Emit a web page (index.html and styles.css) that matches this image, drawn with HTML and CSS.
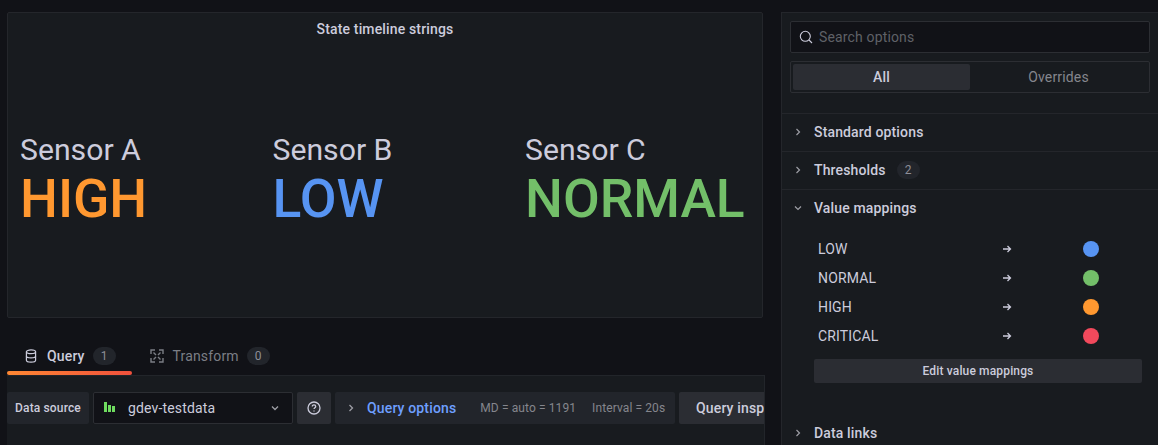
FILE: index.html
```html
<!DOCTYPE html>
<html lang="en">
<head>
    <meta charset="UTF-8" />
    <title>Edit panel</title>
    <link rel="stylesheet" href="styles.css">
</head>
<body>
    <main class="editor">
        <section class="panel">
            <h2 class="panel-title">State timeline strings</h2>
            <div class="stats">
                <div class="stat">
                    <div class="stat-name">Sensor A</div>
                    <div class="stat-value orange">HIGH</div>
                </div>
                <div class="stat">
                    <div class="stat-name">Sensor B</div>
                    <div class="stat-value blue">LOW</div>
                </div>
                <div class="stat">
                    <div class="stat-name">Sensor C</div>
                    <div class="stat-value green">NORMAL</div>
                </div>
            </div>
        </section>

        <nav class="tabs">
            <div class="tab active">
                <svg class="tab-icon" viewBox="0 0 14 14" fill="none" stroke="currentColor" stroke-width="1.2">
                    <ellipse cx="7" cy="2.8" rx="4.6" ry="1.9"/>
                    <path d="M2.4 2.8v8.4c0 1 2 1.9 4.6 1.9s4.6-.9 4.6-1.9V2.8"/>
                    <path d="M2.4 7c0 1 2 1.9 4.6 1.9s4.6-.9 4.6-1.9"/>
                </svg>
                <span>Query</span>
                <span class="count">1</span>
            </div>
            <div class="tab">
                <svg class="tab-icon" viewBox="0 0 14 14" fill="none" stroke="currentColor" stroke-width="1.4">
                    <path d="M1 5V1h4M9 1h4v4M13 9v4H9M5 13H1V9"/>
                    <path d="M3.5 3.5l2.5 2.5M10.5 3.5L8 6M10.5 10.5L8 8M3.5 10.5L6 8"/>
                </svg>
                <span>Transform</span>
                <span class="count">0</span>
            </div>
        </nav>

        <section class="query-box">
            <div class="query-row">
                <div class="ds-label">Data source</div>
                <div class="ds-select">
                    <svg class="ds-logo" viewBox="0 0 12 10">
                        <rect x="0" y="0" width="3" height="10" fill="#6fdc5f"/>
                        <rect x="4" y="3" width="3" height="7" fill="#6fdc5f"/>
                        <rect x="8" y="4" width="3" height="6" fill="#6fdc5f"/>
                    </svg>
                    <span class="ds-name">gdev-testdata</span>
                    <svg class="chevron down" viewBox="0 0 10 10" fill="none" stroke="currentColor" stroke-width="1.3">
                        <path d="M2 3.5L5 6.5L8 3.5"/>
                    </svg>
                </div>
                <button class="help-btn">
                    <svg viewBox="0 0 14 14" fill="none" stroke="currentColor" stroke-width="1.3">
                        <circle cx="7" cy="7" r="6"/>
                        <path d="M5.3 5.5c0-1 .8-1.7 1.7-1.7s1.7.7 1.7 1.6c0 1.2-1.7 1.3-1.7 2.6"/>
                        <path d="M7 9.6v1"/>
                    </svg>
                </button>
                <div class="query-options">
                    <svg class="chevron" viewBox="0 0 10 10" fill="none" stroke="currentColor" stroke-width="1.3">
                        <path d="M3.5 2L6.5 5L3.5 8"/>
                    </svg>
                    <span class="qo-title">Query options</span>
                    <span class="qo-meta">MD = auto = 1191</span>
                    <span class="qo-meta">Interval = 20s</span>
                </div>
                <button class="inspector-btn">Query inspector</button>
            </div>
        </section>
    </main>

    <aside class="options">
        <div class="options-head">
            <div class="search">
                <svg viewBox="0 0 14 14" fill="none" stroke="currentColor" stroke-width="1.1">
                    <circle cx="6.3" cy="6.3" r="5"/>
                    <path d="M10 10l3 3"/>
                </svg>
                <span>Search options</span>
            </div>
            <div class="switch">
                <div class="switch-item on">All</div>
                <div class="switch-item">Overrides</div>
            </div>
        </div>

        <div class="group">
            <svg class="chevron" viewBox="0 0 10 10" fill="none" stroke="currentColor" stroke-width="1.2"><path d="M3.5 2L6.5 5L3.5 8"/></svg>
            <span>Standard options</span>
        </div>
        <div class="group">
            <svg class="chevron" viewBox="0 0 10 10" fill="none" stroke="currentColor" stroke-width="1.2"><path d="M3.5 2L6.5 5L3.5 8"/></svg>
            <span>Thresholds</span>
            <span class="count">2</span>
        </div>
        <div class="group open">
            <svg class="chevron" viewBox="0 0 10 10" fill="none" stroke="currentColor" stroke-width="1.2"><path d="M2 3.5L5 6.5L8 3.5"/></svg>
            <span>Value mappings</span>
        </div>

        <div class="mappings">
            <div class="mapping">
                <span class="map-name">LOW</span>
                <span class="map-arrow">
                    <svg viewBox="0 0 10 10" fill="none" stroke="currentColor" stroke-width="1.3"><path d="M1 5h7.5M5.5 2l3 3-3 3"/></svg>
                </span>
                <span class="dot bg-blue"></span>
            </div>
            <div class="mapping">
                <span class="map-name">NORMAL</span>
                <span class="map-arrow">
                    <svg viewBox="0 0 10 10" fill="none" stroke="currentColor" stroke-width="1.3"><path d="M1 5h7.5M5.5 2l3 3-3 3"/></svg>
                </span>
                <span class="dot bg-green"></span>
            </div>
            <div class="mapping">
                <span class="map-name">HIGH</span>
                <span class="map-arrow">
                    <svg viewBox="0 0 10 10" fill="none" stroke="currentColor" stroke-width="1.3"><path d="M1 5h7.5M5.5 2l3 3-3 3"/></svg>
                </span>
                <span class="dot bg-orange"></span>
            </div>
            <div class="mapping">
                <span class="map-name">CRITICAL</span>
                <span class="map-arrow">
                    <svg viewBox="0 0 10 10" fill="none" stroke="currentColor" stroke-width="1.3"><path d="M1 5h7.5M5.5 2l3 3-3 3"/></svg>
                </span>
                <span class="dot bg-red"></span>
            </div>
            <button class="edit-btn">Edit value mappings</button>
        </div>

        <div class="group last">
            <svg class="chevron" viewBox="0 0 10 10" fill="none" stroke="currentColor" stroke-width="1.2"><path d="M3.5 2L6.5 5L3.5 8"/></svg>
            <span>Data links</span>
        </div>
    </aside>
</body>
</html>
```

FILE: styles.css
```css
* {
    margin: 0;
    padding: 0;
    box-sizing: border-box;
}

html, body {
    height: 100%;
    overflow: hidden;
}

body {
    display: flex;
    background-color: #111217;
    color: #ccccdc;
    font-family: Roboto, sans-serif;
    font-size: 14px;
    letter-spacing: 0.01071em;
    padding: 12px 0 0 7px;
}

button {
    font-family: inherit;
    letter-spacing: inherit;
    border: none;
}

.editor {
    width: 758px;
    flex-shrink: 0;
}

.panel {
    height: 306px;
    background-color: #181b1f;
    border: 1px solid #24262b;
    border-radius: 2px;
    width: 756px;
}

.panel-title {
    font-size: 14px;
    font-weight: 500;
    line-height: 16px;
    text-align: center;
    padding-top: 8px;
}

.stats {
    display: flex;
    padding: 96px 0 0 12px;
}

.stat {
    width: 252.5px;
    flex-shrink: 0;
    letter-spacing: 0;
}

.stat-name {
    font-size: 30.2px;
    line-height: 34px;
}

.stat-value {
    font-size: 53.4px;
    font-weight: 500;
    line-height: 64px;
}

.orange { color: #ff9830; }
.blue { color: #5794f2; }
.green { color: #73bf69; }

.bg-orange { background-color: #ff9830; }
.bg-blue { background-color: #5794f2; }
.bg-green { background-color: #73bf69; }
.bg-red { background-color: #f2495c; }

.tabs {
    display: flex;
    gap: 1px;
    height: 57px;
    padding-top: 22px;
}

.tab {
    display: flex;
    align-items: center;
    height: 35px;
    padding: 0 16px 4px 17px;
    gap: 8px;
    color: #7b7e85;
    font-size: 14px;
    position: relative;
}

.tab.active {
    color: #ccccdc;
    font-weight: 500;
}

.tab.active::after {
    content: "";
    position: absolute;
    left: 0;
    right: 0;
    bottom: 0;
    height: 4px;
    border-radius: 2px;
    background-image: linear-gradient(90deg, #ff8833, #f0503c);
}

.tab-icon {
    width: 14px;
    height: 14px;
    margin-right: 1px;
}

.count {
    display: inline-block;
    min-width: 23px;
    height: 18px;
    line-height: 18px;
    border-radius: 9px;
    background-color: #22252b;
    color: #8e8e97;
    font-size: 12px;
    font-weight: 400;
    text-align: center;
}

.query-box {
    height: 80px;
    background-color: #181b1f;
    border-top: 1px solid #22252a;
    border-right: 1px solid #22252a;
    overflow: hidden;
    padding-top: 16px;
    width: 758px;
}

.query-row {
    display: flex;
    height: 32px;
    gap: 4px;
    white-space: nowrap;
}

.ds-label {
    width: 82px;
    flex-shrink: 0;
    background-color: #22252b;
    border-radius: 2px;
    font-size: 12px;
    font-weight: 500;
    line-height: 32px;
    text-align: center;
}

.ds-select {
    display: flex;
    align-items: center;
    width: 200px;
    flex-shrink: 0;
    background-color: #111217;
    border: 1px solid #2c2e33;
    border-radius: 2px;
    padding: 0 12px 0 10px;
}

.ds-logo {
    width: 12px;
    height: 10px;
    margin: 0 12px 2px 0;
}

.ds-name {
    flex: 1;
    font-size: 14px;
}

.chevron {
    width: 10px;
    height: 10px;
    color: #9d9ea5;
    flex-shrink: 0;
}

.help-btn {
    width: 34px;
    height: 32px;
    flex-shrink: 0;
    background-color: #2b2d33;
    border-radius: 2px;
    color: #ccccdc;
    display: flex;
    align-items: center;
    justify-content: center;
}

.help-btn svg {
    width: 14px;
    height: 14px;
}

.query-options {
    display: flex;
    align-items: center;
    width: 340px;
    flex-shrink: 0;
    background-color: #22252b;
    border-radius: 2px;
    padding-left: 11px;
}

.qo-title {
    color: #6e9fff;
    font-size: 14px;
    font-weight: 500;
    margin: 0 24px 0 11px;
}

.qo-meta {
    color: #85868d;
    font-size: 12px;
    letter-spacing: 0.1px;
    margin-right: 16px;
}

.inspector-btn {
    flex-shrink: 0;
    height: 32px;
    padding: 0 17px;
    background-color: #2b2d33;
    border-radius: 2px;
    color: #ccccdc;
    font-size: 14px;
    font-weight: 500;
}

.options {
    margin-left: 16px;
    flex: 1;
    background-color: #181b1f;
    border: 1px solid #24262b;
    border-right: none;
    border-bottom: none;
    overflow: hidden;
}

.options-head {
    padding: 8px 8px 20px 8px;
}

.search {
    display: flex;
    align-items: center;
    gap: 6px;
    height: 32px;
    background-color: #111217;
    border: 1px solid #2c2e33;
    border-radius: 2px;
    padding: 0 8px;
    color: #5f6167;
}

.search svg {
    width: 14px;
    height: 14px;
    color: #ccccdc;
}

.switch {
    display: flex;
    height: 32px;
    margin-top: 8px;
    border: 1px solid #2c2e33;
    border-radius: 2px;
    padding: 2px;
}

.switch-item {
    flex: 1;
    text-align: center;
    line-height: 26px;
    color: #85868d;
}

.switch-item.on {
    background-color: #2b2d33;
    border-radius: 2px;
    color: #ccccdc;
    font-weight: 500;
}

.group {
    display: flex;
    align-items: center;
    height: 38px;
    border-top: 1px solid #24262b;
    padding: 0 0 2px 11px;
    font-weight: 500;
}

.group span:first-of-type {
    margin-left: 11px;
}

.group .count {
    margin-left: 11px;
}

.group.last {
    border-top: none;
}

.mappings {
    padding: 7px 16px 32px 32px;
}

.mapping {
    display: grid;
    grid-template-columns: 184px 10px 1fr;
    align-items: center;
    height: 29px;
    padding-left: 4px;
}

.map-arrow {
    display: flex;
    justify-content: center;
    color: #ccccdc;
}

.map-arrow svg {
    width: 10px;
    height: 10px;
}

.dot {
    width: 16px;
    height: 16px;
    border-radius: 50%;
    margin-left: 71px;
}

.edit-btn {
    display: block;
    width: 100%;
    height: 24px;
    margin-top: 9px;
    background-color: #2b2d33;
    border-radius: 2px;
    color: #ccccdc;
    font-size: 12px;
    font-weight: 500;
}
```
